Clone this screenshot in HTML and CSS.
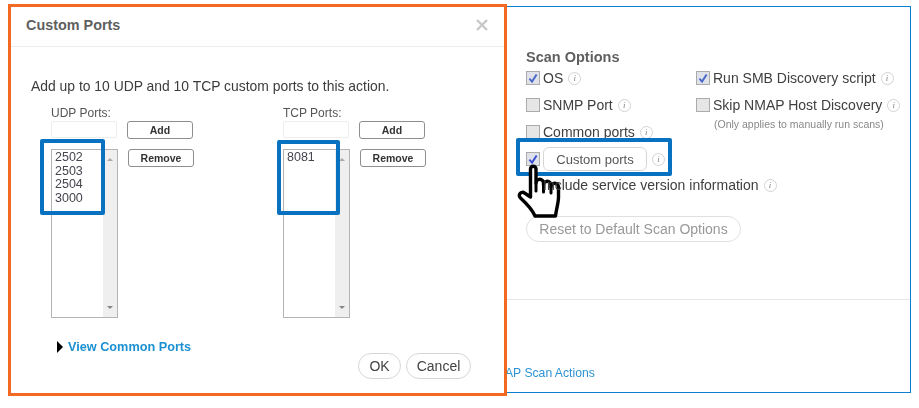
FILE: index.html
```html
<!DOCTYPE html>
<html lang="en">
<head>
<meta charset="utf-8">
<title>Custom Ports</title>
<link rel="stylesheet" href="styles.css">
</head>
<body>
<div class="stage">
  <section class="modal">
    <header class="modal-head">
      <h2>Custom Ports</h2>
      <svg class="close" viewBox="0 0 12 12" width="12" height="12"><path d="M1 1 11 11M11 1 1 11" stroke="#c8c8c8" stroke-width="2.4" fill="none"/></svg>
    </header>
    <p class="intro">Add up to 10 UDP and 10 TCP custom ports to this action.</p>
    <div class="columns">
      <div class="port-col">
        <label class="port-label">UDP Ports:</label>
        <div class="port-row">
          <span class="text-input"></span>
          <button class="small-btn">Add</button>
        </div>
        <div class="port-row list-row">
          <div class="listbox">
            <div class="items"><div>2502</div><div>2503</div><div>2504</div><div>3000</div></div>
            <div class="scrollbar"><i class="up"></i><i class="down"></i></div>
            <span class="mark mark-udp"></span>
          </div>
          <button class="small-btn">Remove</button>
        </div>
      </div>
      <div class="port-col">
        <label class="port-label">TCP Ports:</label>
        <div class="port-row">
          <span class="text-input"></span>
          <button class="small-btn">Add</button>
        </div>
        <div class="port-row list-row">
          <div class="listbox">
            <div class="items"><div>8081</div></div>
            <div class="scrollbar"><i class="up"></i><i class="down"></i></div>
            <span class="mark mark-tcp"></span>
          </div>
          <button class="small-btn">Remove</button>
        </div>
      </div>
    </div>
    <div class="common"><i class="tri"></i><a>View Common Ports</a></div>
    <footer class="modal-foot">
      <button class="pill ok">OK</button>
      <button class="pill cancel">Cancel</button>
    </footer>
  </section>

  <section class="panel">
    <div class="options">
      <h3>Scan Options</h3>
      <div class="opt-grid">
        <div class="opt"><span class="cb on"><svg viewBox="0 0 10 10"><path d="M2 5.500 4.200 8 8 2" fill="none" stroke="#4a68c8" stroke-width="1.600"/></svg></span>OS<span class="info">i</span></div>
        <div class="opt"><span class="cb on"><svg viewBox="0 0 10 10"><path d="M2 5.500 4.200 8 8 2" fill="none" stroke="#4a68c8" stroke-width="1.600"/></svg></span>Run SMB Discovery script<span class="info">i</span></div>
        <div class="opt"><span class="cb"></span>SNMP Port<span class="info">i</span></div>
        <div class="opt"><span class="cb"></span>Skip NMAP Host Discovery<span class="info">i</span></div>
        <div class="opt"><span class="cb"></span>Common ports<span class="info">i</span></div>
        <div class="note">(Only applies to manually run scans)</div>
        <div class="opt wide custom-opt"><span class="cb on"><svg viewBox="0 0 10 10"><path d="M2 5.500 4.200 8 8 2" fill="none" stroke="#3a4fd0" stroke-width="1.600"/></svg></span><button class="pill custom">Custom ports</button><span class="info">i</span>
          <span class="mark mark-custom"></span>
          <svg class="hand" viewBox="0 0 48 56" width="48" height="56"><path d="M14.500 34V6a2.750 2.750 0 0 1 5.500 0V20a3.750 3.750 0 0 1 7.500 0V22a3.750 3.750 0 0 1 7.500 0V24a3.750 3.750 0 0 1 7.500 0V34c0 6-2 11-3 19H19C16 46 11 41 4.500 35a3 3 0 0 1 4-5l6 4" fill="#fff" stroke="#000" stroke-width="3.400" stroke-linejoin="round" stroke-linecap="round"/><path d="M20 20V28M27.500 22V29M35 24V30" fill="none" stroke="#000" stroke-width="3" stroke-linecap="round"/></svg>
        </div>
        <div class="opt wide"><span class="cb hidden-cb"></span>Include service version information<span class="info">i</span></div>
      </div>
      <button class="pill reset">Reset to Default Scan Options</button>
    </div>
    <div class="panel-foot"><a>NMAP Scan Actions</a></div>
  </section>
</div>
</body>
</html>
```
FILE: styles.css
```css
* { box-sizing: border-box; }
html, body { margin: 0; background: #fff; }
body { width: 919px; height: 408px; overflow: hidden; font-family: "Liberation Sans", Arial, sans-serif; color: #444; }
.stage { display: flex; align-items: flex-start; padding: 4px 0 0 8px; filter: blur(0.35px); }
button { font-family: inherit; cursor: default; }

.modal { position: relative; z-index: 1; flex: none; width: 499px; height: 392px; border: 3px solid #f26a21; background: #fff; }
.modal-head { display: flex; align-items: center; justify-content: space-between; height: 40px; padding: 0 16px 4px 15px; border-bottom: 1px solid #ececec; }
.modal-head h2 { margin: 0; font-size: 14.400px; font-weight: bold; color: #5f5f5f; }
.intro { margin: 29px 0 0 20px; font-size: 13.900px; line-height: 20px; color: #3c3c3c; }
.columns { display: flex; margin: 9px 0 0 40px; }
.port-col { flex: none; width: 232px; }
.port-label { display: block; font-size: 12px; line-height: 16px; color: #555; }
.port-row { display: flex; align-items: flex-start; gap: 10px; margin-top: 0; }
.list-row { margin-top: 10px; }
.text-input { width: 66px; height: 17px; border: 1px solid #ededed; border-radius: 2px; background: #fff; }
.small-btn { width: 66px; height: 18px; padding: 0; border: 1px solid #8e8e8e; border-radius: 3px; background: #fff; font-size: 10.500px; font-weight: bold; color: #333; }
.listbox { position: relative; display: flex; width: 67px; height: 169px; border: 1px solid #b4b4b4; }
.items { flex: 1; padding: 1px 0 0 3px; font-size: 12.500px; line-height: 13.700px; color: #47444e; }
.scrollbar { position: relative; width: 14px; background: #efefef; }
.scrollbar i { position: absolute; left: 4px; border-left: 3px solid transparent; border-right: 3px solid transparent; }
.scrollbar .up { top: 8px; border-bottom: 3px solid #aaa; }
.scrollbar .down { bottom: 8px; border-top: 3px solid #888; }
.mark { position: absolute; border: 4px solid #0972c0; border-radius: 2px; pointer-events: none; }
.mark-udp { left: -12px; top: -11px; width: 65px; height: 76px; }
.mark-tcp { left: -7px; top: -10px; width: 63px; height: 75px; }
.common { display: flex; align-items: center; gap: 5px; margin: 22px 0 0 46px; font-size: 12.700px; font-weight: bold; color: #1c90d0; }
.tri { border-left: 6px solid #000; border-top: 6px solid transparent; border-bottom: 6px solid transparent; }
.modal-foot { display: flex; justify-content: flex-end; gap: 5px; margin: -1px 33px 0 0; }
.pill { height: 26px; padding: 0 12px; border: 1px solid #d6d6d6; border-radius: 13px; background: #fff; font-size: 14px; color: #444; }
.ok { width: 43px; padding: 0; }
.cancel { width: 65px; padding: 0; }

.panel { flex: none; display: flex; flex-direction: column; width: 504px; height: 387px; margin: 2px 0 0 -100px; border: 1px solid #0a7fd0; }
.options { height: 293px; padding: 41px 0 0 118px; border-bottom: 1px solid #e6e6e6; }
.options h3 { margin: 0; font-size: 14.500px; line-height: 18px; font-weight: bold; color: #5f5f5f; }
.opt-grid { display: grid; grid-template-columns: 170px auto; grid-template-rows: 27px 27px 26px 27px 27px; justify-content: start; width: 384px; margin-top: 1px; }
.opt { position: relative; display: flex; align-items: center; font-size: 14px; color: #3f3f3f; height: 22px; }
.cb { flex: none; display: inline-block; width: 14px; height: 14px; margin-right: 3px; border: 1px solid #ababab; background: #e6e6e6; }
.cb.on { background: #e0e2ea; }
.cb svg { display: block; width: 12px; height: 12px; }
.hidden-cb { visibility: hidden; }
.info { flex: none; width: 13px; height: 13px; margin-left: 5px; border: 1px solid #d2d2d2; border-radius: 50%; font: italic 9px/11px "Liberation Serif", serif; text-align: center; color: #888; }
.note { padding: 0 0 0 18px; margin-top: -4px; font-size: 10.500px; line-height: 14px; color: #888; }
.wide { grid-column: 1 / 3; }
.custom { height: 24px; width: 104px; padding: 0; border-radius: 6px; font-size: 13px; color: #555; }
.custom-opt { height: 24px; }
.mark-custom { left: -10px; top: -9px; width: 156px; height: 38px; }
.hand { position: absolute; left: -10px; top: 16px; }
.reset { display: block; width: 215px; height: 26px; margin-top: 15px; padding: 0; font-size: 14px; color: #999; border-color: #e0e0e0; }
.panel-foot { padding: 66px 0 0 78px; font-size: 12.200px; color: #2e93d3; }
```
